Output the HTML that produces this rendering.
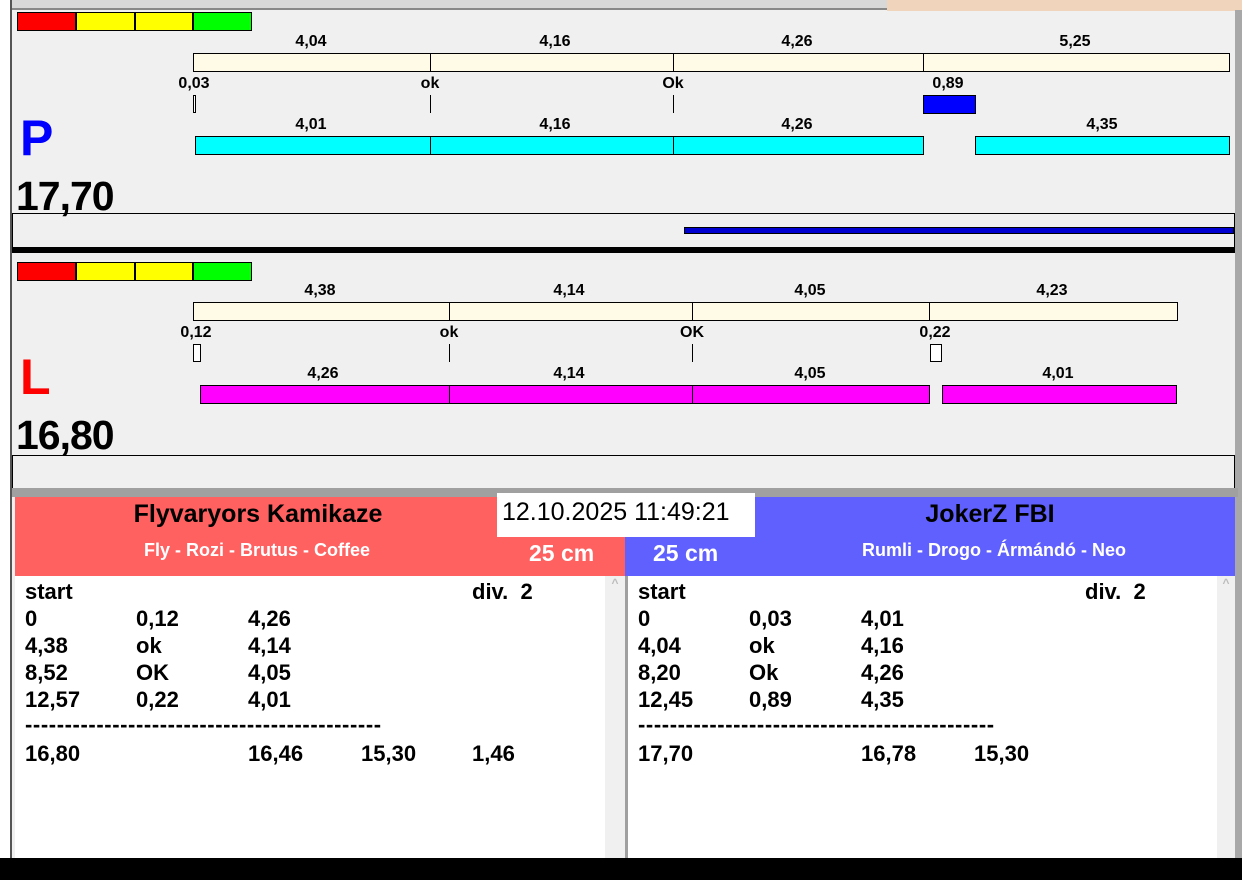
<!DOCTYPE html>
<html><head><meta charset="utf-8"><style>
*{margin:0;padding:0;box-sizing:border-box}
body{width:1242px;height:880px;position:relative;overflow:hidden;background:#f0f0f0;font-family:"Liberation Sans",Arial,sans-serif;font-weight:bold;color:#000}
div{position:absolute}
.l{font-size:16px;transform:translateX(-50%);white-space:nowrap;line-height:18px}
.bar{border:1px solid #000}
.v{width:1px;background:#000}
.t{font-size:22px;line-height:24px;white-space:nowrap}
</style></head><body>
<div style="left:0;top:0;width:887px;height:10px;background:#d8d8d8;border-bottom:2px solid #888"></div>
<div style="left:887px;top:0;width:355px;height:11px;background:#f0d4bc"></div>
<div style="left:0;top:0;width:12px;height:860px;background:#fff;border-right:2px solid #555"></div>
<div style="left:1235px;top:10px;width:7px;height:850px;background:#a8a8a8"></div>

<div style="left:17px;top:12px;width:59px;height:19px;background:#f00;border:1px solid #000"></div>
<div style="left:76px;top:12px;width:59px;height:19px;background:#ff0;border:1px solid #000"></div>
<div style="left:135px;top:12px;width:58px;height:19px;background:#ff0;border:1px solid #000"></div>
<div style="left:193px;top:12px;width:59px;height:19px;background:#0f0;border:1px solid #000"></div>
<div class="l" style="left:311px;top:33px">4,04</div>
<div class="l" style="left:555px;top:33px">4,16</div>
<div class="l" style="left:797px;top:33px">4,26</div>
<div class="l" style="left:1075px;top:33px">5,25</div>
<div class="bar" style="left:193px;top:53px;width:1037px;height:19px;background:#fffbe6"></div>
<div class="v" style="left:430px;top:53px;height:19px"></div>
<div class="v" style="left:673px;top:53px;height:19px"></div>
<div class="v" style="left:923px;top:53px;height:19px"></div>
<div class="l" style="left:194px;top:75px">0,03</div>
<div class="l" style="left:430px;top:75px">ok</div>
<div class="l" style="left:673px;top:75px">Ok</div>
<div class="l" style="left:948px;top:75px">0,89</div>
<div class="bar" style="left:193px;top:95px;width:3px;height:18px;background:#fff"></div>
<div class="v" style="left:430px;top:95px;height:18px"></div>
<div class="v" style="left:673px;top:95px;height:18px"></div>
<div class="bar" style="left:923px;top:95px;width:53px;height:19px;background:#0000ff"></div>
<div style="left:20px;top:108px;font-size:50px;color:#0000ff;line-height:60px">P</div>
<div class="l" style="left:311px;top:116px">4,01</div>
<div class="l" style="left:555px;top:116px">4,16</div>
<div class="l" style="left:797px;top:116px">4,26</div>
<div class="l" style="left:1102px;top:116px">4,35</div>
<div class="bar" style="left:195px;top:136px;width:729px;height:19px;background:#0ff"></div>
<div class="v" style="left:430px;top:136px;height:19px"></div>
<div class="v" style="left:673px;top:136px;height:19px"></div>
<div class="bar" style="left:975px;top:136px;width:255px;height:19px;background:#0ff"></div>
<div style="left:16px;top:173px;font-size:41px;line-height:46px;letter-spacing:-1px">17,70</div>
<div style="left:12px;top:213px;width:1223px;height:35px;border:1px solid #000;border-bottom:none"></div>
<div style="left:684px;top:227px;width:550px;height:7px;background:#0000d0;border:1px solid #000"></div>
<div style="left:12px;top:247px;width:1223px;height:6px;background:#000"></div>

<div style="left:17px;top:262px;width:59px;height:19px;background:#f00;border:1px solid #000"></div>
<div style="left:76px;top:262px;width:59px;height:19px;background:#ff0;border:1px solid #000"></div>
<div style="left:135px;top:262px;width:58px;height:19px;background:#ff0;border:1px solid #000"></div>
<div style="left:193px;top:262px;width:59px;height:19px;background:#0f0;border:1px solid #000"></div>
<div class="l" style="left:320px;top:282px">4,38</div>
<div class="l" style="left:569px;top:282px">4,14</div>
<div class="l" style="left:810px;top:282px">4,05</div>
<div class="l" style="left:1052px;top:282px">4,23</div>
<div class="bar" style="left:193px;top:302px;width:985px;height:19px;background:#fffbe6"></div>
<div class="v" style="left:449px;top:302px;height:19px"></div>
<div class="v" style="left:692px;top:302px;height:19px"></div>
<div class="v" style="left:929px;top:302px;height:19px"></div>
<div class="l" style="left:196px;top:324px">0,12</div>
<div class="l" style="left:449px;top:324px">ok</div>
<div class="l" style="left:692px;top:324px">OK</div>
<div class="l" style="left:935px;top:324px">0,22</div>
<div class="bar" style="left:193px;top:344px;width:8px;height:18px;background:#fff"></div>
<div class="v" style="left:449px;top:344px;height:18px"></div>
<div class="v" style="left:692px;top:344px;height:18px"></div>
<div class="bar" style="left:930px;top:344px;width:12px;height:18px;background:#fff"></div>
<div style="left:20px;top:347px;font-size:50px;color:#f00;line-height:60px">L</div>
<div class="l" style="left:323px;top:365px">4,26</div>
<div class="l" style="left:569px;top:365px">4,14</div>
<div class="l" style="left:810px;top:365px">4,05</div>
<div class="l" style="left:1058px;top:365px">4,01</div>
<div class="bar" style="left:200px;top:385px;width:730px;height:19px;background:#f0f"></div>
<div class="v" style="left:449px;top:385px;height:19px"></div>
<div class="v" style="left:692px;top:385px;height:19px"></div>
<div class="bar" style="left:942px;top:385px;width:235px;height:19px;background:#f0f"></div>
<div style="left:16px;top:412px;font-size:41px;line-height:46px;letter-spacing:-1px">16,80</div>
<div style="left:12px;top:455px;width:1223px;height:34px;border:1px solid #000;border-bottom:none"></div>

<div style="left:12px;top:488px;width:1226px;height:9px;background:#a0a0a0"></div>
<div style="left:15px;top:497px;width:610px;height:79px;background:#ff6060"></div>
<div style="left:625px;top:497px;width:610px;height:79px;background:#6060ff"></div>
<div style="left:258px;top:500px;font-size:25px;transform:translateX(-50%);white-space:nowrap">Flyvaryors Kamikaze</div>
<div style="left:257px;top:540px;font-size:18px;color:#fff;transform:translateX(-50%);white-space:nowrap">Fly - Rozi - Brutus - Coffee</div>
<div style="left:529px;top:540px;font-size:23px;color:#fff">25 cm</div>
<div style="left:653px;top:540px;font-size:23px;color:#fff">25 cm</div>
<div style="left:990px;top:500px;font-size:25px;transform:translateX(-50%);white-space:nowrap">JokerZ FBI</div>
<div style="left:994px;top:540px;font-size:18px;color:#fff;transform:translateX(-50%);white-space:nowrap">Rumli - Drogo - Ármándó - Neo</div>
<div style="left:497px;top:493px;width:258px;height:44px;background:#fff;font-weight:normal;font-size:25px;line-height:34px;padding-left:5px;padding-top:2px">12.10.2025 11:49:21</div>

<div style="left:15px;top:576px;width:590px;height:282px;background:#fff"></div>
<div style="left:605px;top:576px;width:20px;height:282px;background:#f0f0f0;color:#bbb;font-size:12px;text-align:center">^</div>
<div style="left:625px;top:576px;width:3px;height:282px;background:#a0a0a0"></div>
<div style="left:628px;top:576px;width:589px;height:282px;background:#fff"></div>
<div style="left:1217px;top:576px;width:18px;height:282px;background:#f0f0f0;color:#bbb;font-size:12px;text-align:center">^</div>
<div style="left:0;top:858px;width:1242px;height:22px;background:#000"></div>

<div class="t" style="left:25px;top:580px">start</div><div class="t" style="left:472px;top:580px">div.&nbsp; 2</div>
<div class="t" style="left:25px;top:607px">0</div><div class="t" style="left:136px;top:607px">0,12</div><div class="t" style="left:248px;top:607px">4,26</div>
<div class="t" style="left:25px;top:634px">4,38</div><div class="t" style="left:136px;top:634px">ok</div><div class="t" style="left:248px;top:634px">4,14</div>
<div class="t" style="left:25px;top:661px">8,52</div><div class="t" style="left:136px;top:661px">OK</div><div class="t" style="left:248px;top:661px">4,05</div>
<div class="t" style="left:25px;top:688px">12,57</div><div class="t" style="left:136px;top:688px">0,22</div><div class="t" style="left:248px;top:688px">4,01</div>
<div class="t" style="left:25px;top:713px;letter-spacing:0.6px">---------------------------------------------</div>
<div class="t" style="left:25px;top:742px">16,80</div><div class="t" style="left:248px;top:742px">16,46</div><div class="t" style="left:361px;top:742px">15,30</div><div class="t" style="left:472px;top:742px">1,46</div>

<div class="t" style="left:638px;top:580px">start</div><div class="t" style="left:1085px;top:580px">div.&nbsp; 2</div>
<div class="t" style="left:638px;top:607px">0</div><div class="t" style="left:749px;top:607px">0,03</div><div class="t" style="left:861px;top:607px">4,01</div>
<div class="t" style="left:638px;top:634px">4,04</div><div class="t" style="left:749px;top:634px">ok</div><div class="t" style="left:861px;top:634px">4,16</div>
<div class="t" style="left:638px;top:661px">8,20</div><div class="t" style="left:749px;top:661px">Ok</div><div class="t" style="left:861px;top:661px">4,26</div>
<div class="t" style="left:638px;top:688px">12,45</div><div class="t" style="left:749px;top:688px">0,89</div><div class="t" style="left:861px;top:688px">4,35</div>
<div class="t" style="left:638px;top:713px;letter-spacing:0.6px">---------------------------------------------</div>
<div class="t" style="left:638px;top:742px">17,70</div><div class="t" style="left:861px;top:742px">16,78</div><div class="t" style="left:974px;top:742px">15,30</div>
</body></html>
